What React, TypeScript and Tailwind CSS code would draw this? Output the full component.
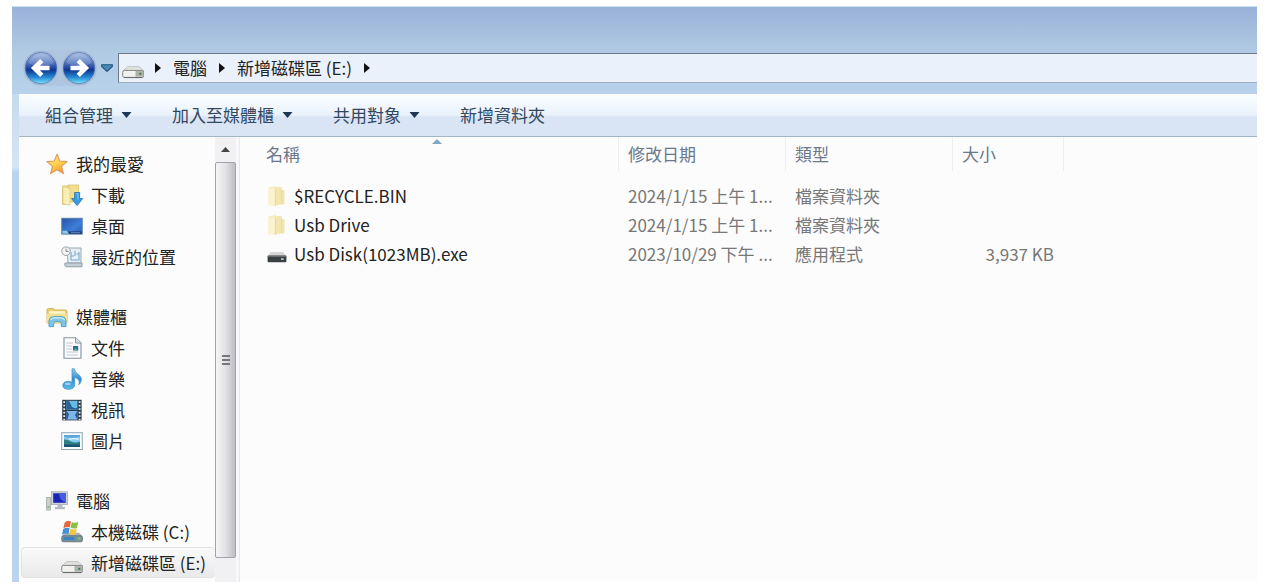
import React from "react";

type IconProps = { className?: string };

function BackForward({ dir }: { dir: "back" | "forward" }) {
  const id = "nav-" + dir;
  return (
    <svg viewBox="0 0 36 36" className="size-9" aria-hidden="true">
      <defs>
        <linearGradient id={id} x1="0" y1="0" x2="0" y2="1">
          <stop offset="0" stopColor="#a9c0e2" />
          <stop offset="0.3" stopColor="#5a7cc2" />
          <stop offset="0.5" stopColor="#2448a2" />
          <stop offset="0.56" stopColor="#0f3590" />
          <stop offset="0.78" stopColor="#2484d0" />
          <stop offset="1" stopColor="#78e6fa" />
        </linearGradient>
      </defs>
      <circle cx="18" cy="18" r="17.3" fill="#a3b7d3" />
      <circle cx="18" cy="18" r="16.3" fill="#c3d6ee" />
      <circle cx="18" cy="18" r="15.8" fill={`url(#${id})`} stroke="#4a6cab" strokeWidth="0.7" />
      <path d="M5 13 A14 14 0 0 1 31 13 Q18 19 5 13Z" fill="#fff" opacity="0.16" />
      <g transform={dir === "forward" ? "rotate(180 18 18)" : undefined}>
        <path d="M26.5 18 H12 M18.8 10.6 L11.2 18 L18.8 25.4" fill="none" stroke="#fff" strokeWidth="4.6" />
      </g>
    </svg>
  );
}

function Drive({ className }: IconProps) {
  return (
    <svg viewBox="0 0 22 22" className={className} aria-hidden="true">
      <path d="M1 14 L5 10.2 Q6 9.6 7 9.6 H16 Q17 9.6 18 10.2 L21.5 14 Z" fill="#e2e2e0" stroke="#b4b3b0" strokeWidth="0.7" />
      <rect x="0.7" y="13.4" width="21" height="7" rx="1.8" fill="#f1f1ef" stroke="#858582" strokeWidth="1" />
      <path d="M13.5 14 H20 Q21 14.2 21 15.2 V18.7 Q21 19.8 20 19.8 H13.5Z" fill="#b0b0ad" />
      <path d="M2 20.6 H20.5" stroke="#6a6a6a" strokeWidth="1" />
      <rect x="17.3" y="15.8" width="2" height="2" fill="#3c7c4a" />
    </svg>
  );
}

function Star({ className }: IconProps) {
  return (
    <svg viewBox="0 0 22 22" className={className} aria-hidden="true">
      <defs>
        <linearGradient id="star" x1="0" y1="0" x2="0.5" y2="1">
          <stop offset="0" stopColor="#fff3a0" />
          <stop offset="0.6" stopColor="#fdd04a" />
          <stop offset="1" stopColor="#f59b38" />
        </linearGradient>
      </defs>
      <path
        d="M11 1.2 L13.7 8 L21 8.6 L15.5 13.3 L17.4 20.6 L11 16.7 L4.6 20.6 L6.5 13.3 L1 8.6 L8.3 8Z"
        fill="url(#star)"
        stroke="#e09a5c"
        strokeWidth="1.1"
        strokeLinejoin="round"
      />
    </svg>
  );
}

function Downloads({ className }: IconProps) {
  return (
    <svg viewBox="0 0 22 22" className={className} aria-hidden="true">
      <path d="M1.5 2 H8 V20 L1.5 20.5Z" fill="#f7e59a" stroke="#d9c374" strokeWidth="0.8" />
      <path d="M7 1 H17.5 V18 H9 L7 20Z" fill="#f3dd8f" stroke="#d9c374" strokeWidth="0.8" />
      <path d="M2 2.5 L9 4.5 V21.2 L2 19.8Z" fill="#fbeeb5" stroke="#d9c374" strokeWidth="0.6" />
      <path d="M13.6 8.5 H18.6 V14.6 H21.7 L16.1 21.6 L10.5 14.6 H13.6Z" fill="#3c9be0" stroke="#1d6fb5" strokeWidth="0.8" />
      <path d="M15 9.6 H17 V15.4" fill="none" stroke="#8fd0f5" strokeWidth="0.9" />
    </svg>
  );
}

function Desktop({ className }: IconProps) {
  return (
    <svg viewBox="0 0 22 22" className={className} aria-hidden="true">
      <defs>
        <linearGradient id="desk" x1="0" y1="0" x2="1" y2="1">
          <stop offset="0" stopColor="#2453a8" />
          <stop offset="0.6" stopColor="#3f7ed8" />
          <stop offset="1" stopColor="#2a5cae" />
        </linearGradient>
      </defs>
      <rect x="0.8" y="3.3" width="20.4" height="15.8" fill="url(#desk)" stroke="#5a7ba6" strokeWidth="1" />
      <path d="M1.3 16.4 H20.7 V18.7 H1.3Z" fill="#1f3d70" />
      <path d="M1.3 15.8 H6 L8 18.7 H1.3Z" fill="#8fc8e8" />
      <path d="M10 17.6 H19" stroke="#6c93c8" strokeWidth="0.8" />
    </svg>
  );
}

function Recent({ className }: IconProps) {
  return (
    <svg viewBox="0 0 22 22" className={className} aria-hidden="true">
      <path d="M6 2 H20 V17 H7Z" fill="#e6eff5" stroke="#9aa9b4" strokeWidth="1" />
      <path d="M4 17 H21 V20.8 H5 Q3 20 4 17Z" fill="#c3ced6" stroke="#8b989f" strokeWidth="0.9" />
      <path d="M10 6 V14 H18 V6 M14 5 V10 M10 10 H13 M15.5 8 H18" fill="none" stroke="#7fa8c8" strokeWidth="1.1" />
      <circle cx="5" cy="5.2" r="4.3" fill="#f4f6f6" stroke="#9aa4a8" strokeWidth="1" />
      <path d="M5 2.6 V5.4 H7.5" fill="none" stroke="#778" strokeWidth="0.9" />
    </svg>
  );
}

function Libraries({ className }: IconProps) {
  return (
    <svg viewBox="0 0 22 22" className={className} aria-hidden="true">
      <path d="M1 4 Q1 2.4 2.5 2.4 H7 L9 4 H19.5 Q21 4 21 5.5 V17 H1Z" fill="#eccf6c" stroke="#c9a747" strokeWidth="0.8" />
      <path d="M3 5.2 H19 V8 H3Z" fill="#fdf7d5" />
      <path d="M1 7.4 H21.4 V17.5 H1Z" fill="#f5e18d" />
      <path d="M3 20.6 V14.4 Q3.5 10.6 8 10.6 H15 Q19.5 10.6 20 14.4 V20.6 H15.3 V17.5 Q15 15.6 13 15.6 H10 Q8 15.6 7.7 17.5 V20.6Z" fill="#7cc4e8" stroke="#4a99c9" strokeWidth="0.9" />
      <path d="M4.5 14 Q5.4 12 8 11.9 H15 Q17.8 12 18.6 14" fill="none" stroke="#d5effa" strokeWidth="1.2" />
    </svg>
  );
}

function Documents({ className }: IconProps) {
  return (
    <svg viewBox="0 0 22 22" className={className} aria-hidden="true">
      <path d="M3 0.8 H14.5 L20 6 V21.2 H3Z" fill="#fafcfd" stroke="#8292a0" strokeWidth="1.1" />
      <path d="M14.5 0.8 V6 H20" fill="#dbe4ea" stroke="#8292a0" strokeWidth="0.9" />
      <path d="M5.5 6 H12 M5.5 9 H11 M5.5 12 H11 M5.5 15 H17 M5.5 18 H17" stroke="#b4bfc9" strokeWidth="0.9" />
      <rect x="12" y="9" width="5.2" height="4.4" fill="#326998" />
      <path d="M12 13.4 L14.5 11 L17.2 13.4Z" fill="#57a4a0" />
    </svg>
  );
}

function Music({ className }: IconProps) {
  return (
    <svg viewBox="0 0 22 22" className={className} aria-hidden="true">
      <defs>
        <linearGradient id="note" x1="0" y1="0" x2="0" y2="1">
          <stop offset="0" stopColor="#8fcdee" />
          <stop offset="0.5" stopColor="#2e8ed0" />
          <stop offset="1" stopColor="#5bbbe9" />
        </linearGradient>
      </defs>
      <path
        d="M11 0.8 H13.4 Q13.6 3.8 17 6.2 Q22 9.6 19.6 14.6 Q18.8 16.2 17.8 16.6 Q19.6 11.3 13.7 9.2 V16.8 Q13.4 21.3 7.3 21.3 Q1.6 21 1.8 17.2 Q2.2 13.4 7.4 13.2 Q9.6 13.2 11 14.2Z"
        fill="url(#note)"
        stroke="#3f8fc2"
        strokeWidth="0.7"
      />
      <ellipse cx="6.8" cy="15.8" rx="3" ry="1.4" fill="#c5e7f6" opacity="0.7" />
    </svg>
  );
}

function Videos({ className }: IconProps) {
  return (
    <svg viewBox="0 0 22 22" className={className} aria-hidden="true">
      <rect x="1.2" y="0.8" width="19.4" height="20.6" fill="#303b48" />
      <rect x="5.4" y="1.8" width="11" height="8.8" fill="#69bce0" />
      <rect x="5.4" y="12" width="11" height="8.6" fill="#7eb6ea" />
      <path d="M5.4 1.8 H8 L11 8 Q14 10 16.4 8.5 V10.6 H5.4Z" fill="#28649a" />
      <path d="M5.4 12 L8 15 L6.4 20.6 H5.4Z M16.4 12 L14 16 L16.4 20.6Z" fill="#255a8f" />
      <path d="M3.2 2.2 V21 M18.6 2.2 V21" stroke="#e0e8ee" strokeWidth="1.8" strokeDasharray="1.9 1.6" />
    </svg>
  );
}

function Pictures({ className }: IconProps) {
  return (
    <svg viewBox="0 0 22 22" className={className} aria-hidden="true">
      <rect x="0.7" y="2.7" width="20.6" height="16.8" fill="#fafcfd" stroke="#8da6ba" strokeWidth="1" />
      <rect x="3" y="5" width="16" height="12" fill="#86caf0" />
      <path d="M3 5 H19 V6.8 Q11 8.6 3 6.8Z" fill="#5ba6da" />
      <path d="M3 9.5 Q7 9 11 12 Q15 13 19 11.5 V17 H3Z" fill="#2f8086" />
      <path d="M3 14.5 H19 V17 H3Z" fill="#1b5375" />
      <path d="M8 9.4 Q12 8 18 9.2" fill="none" stroke="#e8f6fb" strokeWidth="1.2" />
    </svg>
  );
}

function Computer({ className }: IconProps) {
  return (
    <svg viewBox="0 0 22 22" className={className} aria-hidden="true">
      <rect x="0.7" y="7.5" width="3.6" height="12.5" fill="#ccd3cd" stroke="#9aa39d" strokeWidth="0.8" />
      <path d="M1.5 17 H3.5" stroke="#55a555" strokeWidth="1.2" />
      <rect x="5.5" y="1.8" width="16" height="12.8" fill="#cdd3da" stroke="#a3abb6" strokeWidth="0.8" />
      <rect x="7.2" y="3.3" width="12.6" height="9.5" fill="#1c25b5" />
      <path d="M13 3.3 H19.8 V12.8 Q13 10 13 3.3Z" fill="#4a5bdc" />
      <path d="M11.5 14.6 H16.5 V17 H19 V19.2 H9 V17 H11.5Z" fill="#b3bac4" />
    </svg>
  );
}

function SystemDrive({ className }: IconProps) {
  return (
    <svg viewBox="0 0 22 22" className={className} aria-hidden="true">
      <path d="M1 15 L4 11.8 H18 L21.2 15Z" fill="#a8b3b8" />
      <path d="M3.7 1.4 Q6.7 -1 10 0.4 L8.8 6.3 Q5.8 5.2 2.4 7.2Z" fill="#e5693b" />
      <path d="M10.8 0.9 Q13.5 2.5 17.2 1.1 L15.9 7 Q12.6 8.2 9.6 6.7Z" fill="#8abf45" />
      <path d="M2.2 8 Q5.5 6.1 8.6 7.2 L7.5 13 Q4 11.8 0.9 13.8Z" fill="#4192d8" />
      <path d="M9.4 7.5 Q12.5 9.2 15.8 7.8 L14.5 13.5 Q11.5 14.5 8.2 13.2Z" fill="#f4c83e" />
      <rect x="0.8" y="14.8" width="20.6" height="6" rx="1.4" fill="#7d919d" stroke="#5d707b" strokeWidth="0.8" />
      <path d="M2.5 16 H13.5 V19.2 H2.5Z" fill="#3b83c2" />
      <rect x="17" y="16.5" width="2.3" height="2" fill="#73cf73" />
    </svg>
  );
}

function Folder({ className }: IconProps) {
  return (
    <svg viewBox="0 0 22 22" className={className} aria-hidden="true">
      <path d="M2.5 2.5 L10 1 V19.5 L2.5 20.5Z" fill="#f5ebbc" />
      <path d="M9 2 H16 V5 L18.6 5.5 V19 L9 20.5Z" fill="#f3e6b0" />
      <path d="M2.5 2.5 L9.4 4.5 V21.5 L2.5 20Z" fill="#faf3d0" />
      <path d="M9.4 4.5 V21 M15.8 5 V19" stroke="#e3d39a" strokeWidth="0.8" />
    </svg>
  );
}

function UsbDisk({ className }: IconProps) {
  return (
    <svg viewBox="0 0 22 22" className={className} aria-hidden="true">
      <path d="M2 13 L4.5 9 H17.5 L20 13Z" fill="#d6d6d6" />
      <rect x="1.6" y="12.5" width="18.8" height="6.8" rx="0.8" fill="#3a3f41" />
      <path d="M2 13 H20" stroke="#8a8a8a" strokeWidth="1.2" />
      <rect x="15" y="15.2" width="2.6" height="1.8" fill="#b5c8c4" />
    </svg>
  );
}

function Triangle({ dir }: { dir: "down" | "right" }) {
  return dir === "down" ? (
    <svg viewBox="0 0 11 6" className="h-1.5 w-[11px] shrink-0" aria-hidden="true">
      <path d="M0.5 0 H10.5 L5.5 6Z" fill="#1d3656" />
    </svg>
  ) : (
    <svg viewBox="0 0 6 10" className="h-2.5 w-1.5 shrink-0" aria-hidden="true">
      <path d="M0 0 L6 5 L0 10Z" fill="#111" />
    </svg>
  );
}

type Entry = { label: string; icon: (p: IconProps) => React.JSX.Element; selected?: boolean };
type Group = Entry & { items: Entry[] };

const groups: Group[] = [
  {
    label: "我的最愛",
    icon: Star,
    items: [
      { label: "下載", icon: Downloads },
      { label: "桌面", icon: Desktop },
      { label: "最近的位置", icon: Recent },
    ],
  },
  {
    label: "媒體櫃",
    icon: Libraries,
    items: [
      { label: "文件", icon: Documents },
      { label: "音樂", icon: Music },
      { label: "視訊", icon: Videos },
      { label: "圖片", icon: Pictures },
    ],
  },
  {
    label: "電腦",
    icon: Computer,
    items: [
      { label: "本機磁碟 (C:)", icon: SystemDrive },
      { label: "新增磁碟區 (E:)", icon: Drive, selected: true },
    ],
  },
];

const files = [
  { name: "$RECYCLE.BIN", icon: Folder, date: "2024/1/15 上午 1...", type: "檔案資料夾", size: "" },
  { name: "Usb Drive", icon: Folder, date: "2024/1/15 上午 1...", type: "檔案資料夾", size: "" },
  { name: "Usb Disk(1023MB).exe", icon: UsbDisk, date: "2023/10/29 下午 ...", type: "應用程式", size: "3,937 KB" },
];

const commands = [
  { label: "組合管理", menu: true },
  { label: "加入至媒體櫃", menu: true },
  { label: "共用對象", menu: true },
  { label: "新增資料夾", menu: false },
];

function NavPane() {
  return (
    <nav aria-label="瀏覽窗格" className="flex w-[196px] shrink-0 flex-col gap-[29px] pt-[11px] pb-1">
      {groups.map((g) => (
        <div key={g.label}>
          <a href="#" className="flex h-[31px] items-center gap-2 pl-[27px]">
            <g.icon className="size-[22px] shrink-0" />
            {g.label}
          </a>
          <ul>
            {g.items.map((it) => (
              <li key={it.label}>
                <a
                  href="#"
                  className={
                    it.selected
                      ? "ml-0.5 flex h-[31px] items-center gap-2 rounded-sm border border-r-0 border-[#e2e2e2] bg-linear-to-b from-[#fafafa] to-[#e9e9e9] pl-[39px]"
                      : "flex h-[31px] items-center gap-2 pl-[42px]"
                  }
                >
                  <it.icon className="size-[22px] shrink-0" />
                  <span className="whitespace-nowrap">{it.label}</span>
                </a>
              </li>
            ))}
          </ul>
        </div>
      ))}
    </nav>
  );
}

function ScrollBar() {
  return (
    <div className="flex w-[21px] shrink-0 flex-col bg-[#f1f1f3]" aria-hidden="true">
      <div className="flex h-[25px] items-center justify-center">
        <svg viewBox="0 0 9 5" className="h-[5px] w-[9px]">
          <path d="M0 5 L4.5 0 L9 5Z" fill="#444" />
        </svg>
      </div>
      <div className="flex flex-1 items-center justify-center rounded-xs border border-[#a2a2a8] bg-linear-to-r from-[#f6f6f7] via-[#e2e2e5] to-[#bdbdc4]">
        <div className="flex w-2 flex-col gap-0.5">
          <div className="h-0.5 bg-[#77777d]" />
          <div className="h-0.5 bg-[#77777d]" />
          <div className="h-0.5 bg-[#77777d]" />
        </div>
      </div>
      <div className="h-6" />
    </div>
  );
}

function HeadCell({ label, pad, sorted }: { label: string; pad: string; sorted?: boolean }) {
  return (
    <th scope="col" className="h-11 p-0 text-left align-top font-normal">
      <div className={"relative flex h-[34px] items-center border-r border-[#eceff2] " + pad}>
        {label}
        {sorted && (
          <svg viewBox="0 0 10 5" className="absolute top-0.5 left-[192px] h-[5px] w-2.5" aria-hidden="true">
            <path d="M0 5 L5 0 L10 5Z" fill="#7fa6c2" />
          </svg>
        )}
      </div>
    </th>
  );
}

function FileList() {
  return (
    <main className="min-w-0 flex-1 border-l border-[#e8e8ea]">
      <table className="w-full table-fixed border-collapse">
        <colgroup>
          <col className="w-[379px]" />
          <col className="w-[167px]" />
          <col className="w-[167px]" />
          <col className="w-[111px]" />
          <col />
        </colgroup>
        <thead className="text-[#6b788c]">
          <tr>
            <HeadCell label="名稱" pad="pl-[26px]" sorted />
            <HeadCell label="修改日期" pad="pl-[9px]" />
            <HeadCell label="類型" pad="pl-[9px]" />
            <HeadCell label="大小" pad="pl-[9px]" />
            <td />
          </tr>
        </thead>
        <tbody className="text-[#777777]">
          {files.map((f) => (
            <tr key={f.name} className="h-[29px] whitespace-nowrap">
              <td className="p-0">
                <a href="#" className="flex items-center gap-1.5 pl-[26px] text-[#222222]">
                  <f.icon className="size-[22px] shrink-0" />
                  {f.name}
                </a>
              </td>
              <td className="py-0 pr-0 pl-[9px]">{f.date}</td>
              <td className="py-0 pr-0 pl-[9px]">{f.type}</td>
              <td className="py-0 pr-2.5 pl-0 text-right">{f.size}</td>
              <td />
            </tr>
          ))}
        </tbody>
      </table>
    </main>
  );
}

export default function App() {
  return (
    <div className="flex min-h-screen flex-col bg-white pt-1.5 pr-[9px] pb-[5px] pl-3 font-['Noto_Sans_CJK_TC','Noto_Sans',sans-serif] text-[17px] leading-6 text-[#222222]">
      <div className="flex flex-1 flex-col border-t border-[#c5e4ee] bg-[#bbd3ec]">
        <header className="bg-linear-to-b from-[#9ab1d8] via-[#b0cae3] to-[#b8d2ec] pt-[43px] pb-2">
          <div className="flex items-center pl-[11px]">
            <div className="flex gap-0.5 rounded-full bg-[#b0c5e0]">
              <button type="button" aria-label="上一頁">
                <BackForward dir="back" />
              </button>
              <button type="button" aria-label="下一頁">
                <BackForward dir="forward" />
              </button>
            </div>
            <button type="button" aria-label="最近的頁面" className="mr-[5px] ml-1">
              <svg viewBox="0 0 12 8" className="h-2 w-3">
                <path d="M0.7 0.8 H11.3 V2.5 L6 7.4 L0.7 2.5Z" fill="#4d8ab8" stroke="#1f5580" strokeWidth="1.1" />
              </svg>
            </button>
            <div className="flex h-[30px] flex-1 items-center gap-3 border border-r-0 border-t-[#6f7b8a] border-b-[#9db0c0] border-l-[#6f7b8a] bg-[#ebf1fa] pl-[3px]">
              <div className="flex items-center gap-[11px]">
                <Drive className="size-[22px] shrink-0" />
                <Triangle dir="right" />
              </div>
              <button type="button">電腦</button>
              <Triangle dir="right" />
              <button type="button">新增磁碟區 (E:)</button>
              <Triangle dir="right" />
            </div>
          </div>
        </header>
        <div className="flex flex-1 flex-col bg-linear-to-b from-[#c6daee] from-0% via-[#d6e5f4] via-15% to-[#bbd3ec] to-16% pl-[7px]">
          <div className="flex h-[43px] items-center gap-10 border-b border-[#a3b6c4] bg-linear-to-b from-[#fbfeff] from-0% via-[#e9f2fc] via-50% to-[#d9e5f5] to-55% pl-[26px] text-[#33475f]">
            {commands.map((c) => (
              <button key={c.label} type="button" className="flex items-center gap-2">
                {c.label}
                {c.menu && <Triangle dir="down" />}
              </button>
            ))}
          </div>
          <div className="flex flex-1 bg-[#fcfcfc]">
            <NavPane />
            <ScrollBar />
            <div className="w-[3px] bg-[#f7f8fb]" />
            <FileList />
          </div>
        </div>
      </div>
    </div>
  );
}
